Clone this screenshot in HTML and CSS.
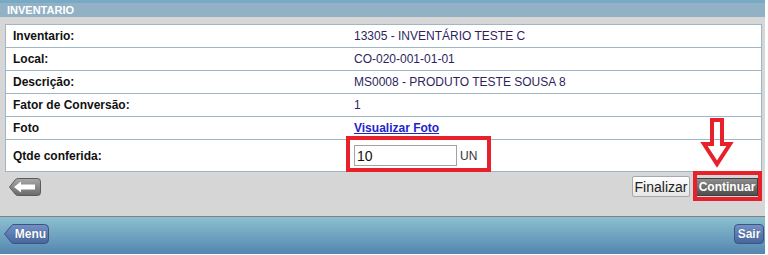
FILE: index.html
```html
<!DOCTYPE html>
<html lang="pt-BR">
<head>
    <meta charset="UTF-8">
    <meta name="viewport" content="width=device-width, initial-scale=1.0">
    <title>Inventario</title>
    <link rel="stylesheet" href="styles.css">
</head>
<body>

    <div class="page">
        <div class="title-bar">INVENTARIO</div>

        <div class="main">
            <div class="info-table">
                <div class="info-row">
                    <div class="info-label">Inventario:</div>
                    <div class="info-value">13305 - INVENTÁRIO TESTE C</div>
                </div>
                <div class="info-row">
                    <div class="info-label">Local:</div>
                    <div class="info-value">CO-020-001-01-01</div>
                </div>
                <div class="info-row">
                    <div class="info-label">Descrição:</div>
                    <div class="info-value">MS0008 - PRODUTO TESTE SOUSA 8</div>
                </div>
                <div class="info-row">
                    <div class="info-label">Fator de Conversão:</div>
                    <div class="info-value">1</div>
                </div>
                <div class="info-row">
                    <div class="info-label">Foto</div>
                    <div class="info-value"><a href="#" class="photo-link">Visualizar Foto</a></div>
                </div>
                <div class="info-row qty-row">
                    <div class="info-label">Qtde conferida:</div>
                    <div class="info-value">
                        <div class="qty-field marked">
                            <input type="text" id="qtde" value="10">
                            <span class="unit">UN</span>
                        </div>
                    </div>
                </div>
            </div>

            <div class="actions">
                <button type="button" class="back-btn" aria-label="Voltar">
                    <svg width="32" height="18" viewBox="0 0 32 18">
                        <defs>
                            <linearGradient id="backGrad" x1="0" y1="0" x2="0" y2="1">
                                <stop offset="0" stop-color="#a9a9a9"/>
                                <stop offset="1" stop-color="#6a6a6a"/>
                            </linearGradient>
                        </defs>
                        <path d="M0.5 9 L6.5 1.5 Q7.5 0.5 9.5 0.5 H28.5 Q31.5 0.5 31.5 3.5 V14.5 Q31.5 17.5 28.5 17.5 H9.5 Q7.5 17.5 6.5 16.5 Z" fill="url(#backGrad)" stroke="#5a5a5a"/>
                        <path d="M5 9 L12 3.5 V6.5 H26 V11.5 H12 V14.5 Z" fill="#fff"/>
                    </svg>
                </button>

                <div class="action-right">
                    <button type="button" class="btn-finish">Finalizar</button>
                    <div class="continue-wrap">
                        <svg class="hint-arrow" width="34" height="54" viewBox="0 0 34 54">
                            <path d="M12 4 H22 V28 H30 L17 48 L4 28 H12 Z" fill="none" stroke="#e8202a" stroke-width="4"/>
                        </svg>
                        <button type="button" class="btn-continue marked">Continuar</button>
                    </div>
                </div>
            </div>
        </div>

        <div class="footer-bar">
            <button type="button" class="nav-btn menu-btn">
                <svg class="nav-shape" width="45" height="20" viewBox="0 0 45 20">
                    <defs>
                        <linearGradient id="navGrad" x1="0" y1="0" x2="0" y2="1">
                            <stop offset="0" stop-color="#7491c4"/>
                            <stop offset="1" stop-color="#46679e"/>
                        </linearGradient>
                    </defs>
                    <path d="M0.5 10 L7.5 1.5 Q8.5 0.5 10 0.5 H40.5 Q44.5 0.5 44.5 4.5 V15.5 Q44.5 19.5 40.5 19.5 H10 Q8.5 19.5 7.5 18.5 Z" fill="url(#navGrad)" stroke="#3a5485"/>
                </svg>
                <span>Menu</span>
            </button>
            <button type="button" class="nav-btn sair-btn"><span>Sair</span></button>
        </div>
    </div>

</body>
</html>
```

FILE: styles.css
```css
body {
    margin: 0;
    background-color: #fff;
    font-family: 'Liberation Sans', Arial, sans-serif;
    font-size: 12px;
}
.page {
    width: 765px;
}
.title-bar {
    height: 14px;
    line-height: 14px;
    border-top: 3px solid #78aac6;
    background-color: #93b1c4;
    color: #fff;
    font-weight: bold;
    font-size: 11px;
    padding-left: 7px;
}
.main {
    height: 199px;
    box-sizing: border-box;
    padding: 7px 3px 0 5px;
    background-color: #d6d6d6;
}
.info-table {
    background-color: #fff;
    border: 1px solid #9fb6c7;
}
.info-row {
    display: flex;
    align-items: center;
    height: 22px;
    border-bottom: 1px solid #9fb6c7;
}
.info-row.qty-row {
    height: 31px;
    border-bottom: none;
}
.info-label {
    width: 341px;
    padding-left: 7px;
    font-weight: bold;
    color: #111;
}
.info-value {
    color: #2e1f5e;
}
.photo-link {
    color: #2323c8;
    font-weight: bold;
}
.qty-field {
    display: flex;
    align-items: center;
    gap: 3px;
}
.qty-field input {
    width: 103px;
    height: 21px;
    box-sizing: border-box;
    margin: 0;
    padding: 0 2px;
    border: 1px solid #a3a3a3;
    font-family: 'Liberation Sans', Arial, sans-serif;
    font-size: 14px;
    color: #111;
}
.unit {
    color: #333;
}
.marked {
    position: relative;
}
.qty-field.marked::after {
    content: '';
    position: absolute;
    top: -9px;
    right: -14px;
    bottom: -6px;
    left: -8px;
    border: 4px solid #e8202a;
}
.actions {
    display: flex;
    justify-content: space-between;
    align-items: center;
    margin-top: 4px;
    height: 21px;
}
.back-btn {
    margin-left: 4px;
    padding: 0;
    border: none;
    background: none;
    height: 18px;
    display: flex;
}
.action-right {
    display: flex;
    align-items: center;
    gap: 6px;
    margin-right: 4px;
}
.btn-finish {
    height: 21px;
    width: 58px;
    padding: 0;
    border: 1px solid #a9a9a9;
    border-radius: 2px;
    background: linear-gradient(#ffffff, #e6e6e6);
    font-family: 'Liberation Sans', Arial, sans-serif;
    font-size: 14px;
    color: #222;
}
.continue-wrap {
    position: relative;
    display: flex;
}
.hint-arrow {
    position: absolute;
    left: 4px;
    top: -62px;
}
.btn-continue {
    height: 18px;
    width: 62px;
    padding: 0;
    border: 1px solid #3f3f3f;
    background: linear-gradient(#8c8c8c, #4e4e4e);
    color: #fff;
    font-family: 'Liberation Sans', Arial, sans-serif;
    font-weight: bold;
    font-size: 12px;
}
.btn-continue.marked::after {
    content: '';
    position: absolute;
    top: -8px;
    right: -5px;
    bottom: -6px;
    left: -4px;
    border: 4px solid #e8202a;
}
.footer-bar {
    display: flex;
    justify-content: space-between;
    align-items: flex-start;
    height: 38px;
    box-sizing: border-box;
    padding: 7px 1px 0 4px;
    border-top: 1px solid #808080;
    background: linear-gradient(#8cc0cf, #5486b0);
}
.nav-btn {
    position: relative;
    height: 20px;
    padding: 0;
    border: none;
    background: none;
    color: #fff;
    font-family: 'Liberation Sans', Arial, sans-serif;
    font-weight: bold;
    font-size: 12px;
    text-shadow: 0 0 1px #2c4470;
}
.nav-btn span {
    position: relative;
}
.nav-shape {
    position: absolute;
    left: 0;
    top: 0;
}
.menu-btn {
    width: 45px;
    padding-left: 8px;
}
.sair-btn {
    width: 30px;
    border: 1px solid #3a5485;
    border-radius: 4px;
    background: linear-gradient(#7491c4, #46679e);
}
```
